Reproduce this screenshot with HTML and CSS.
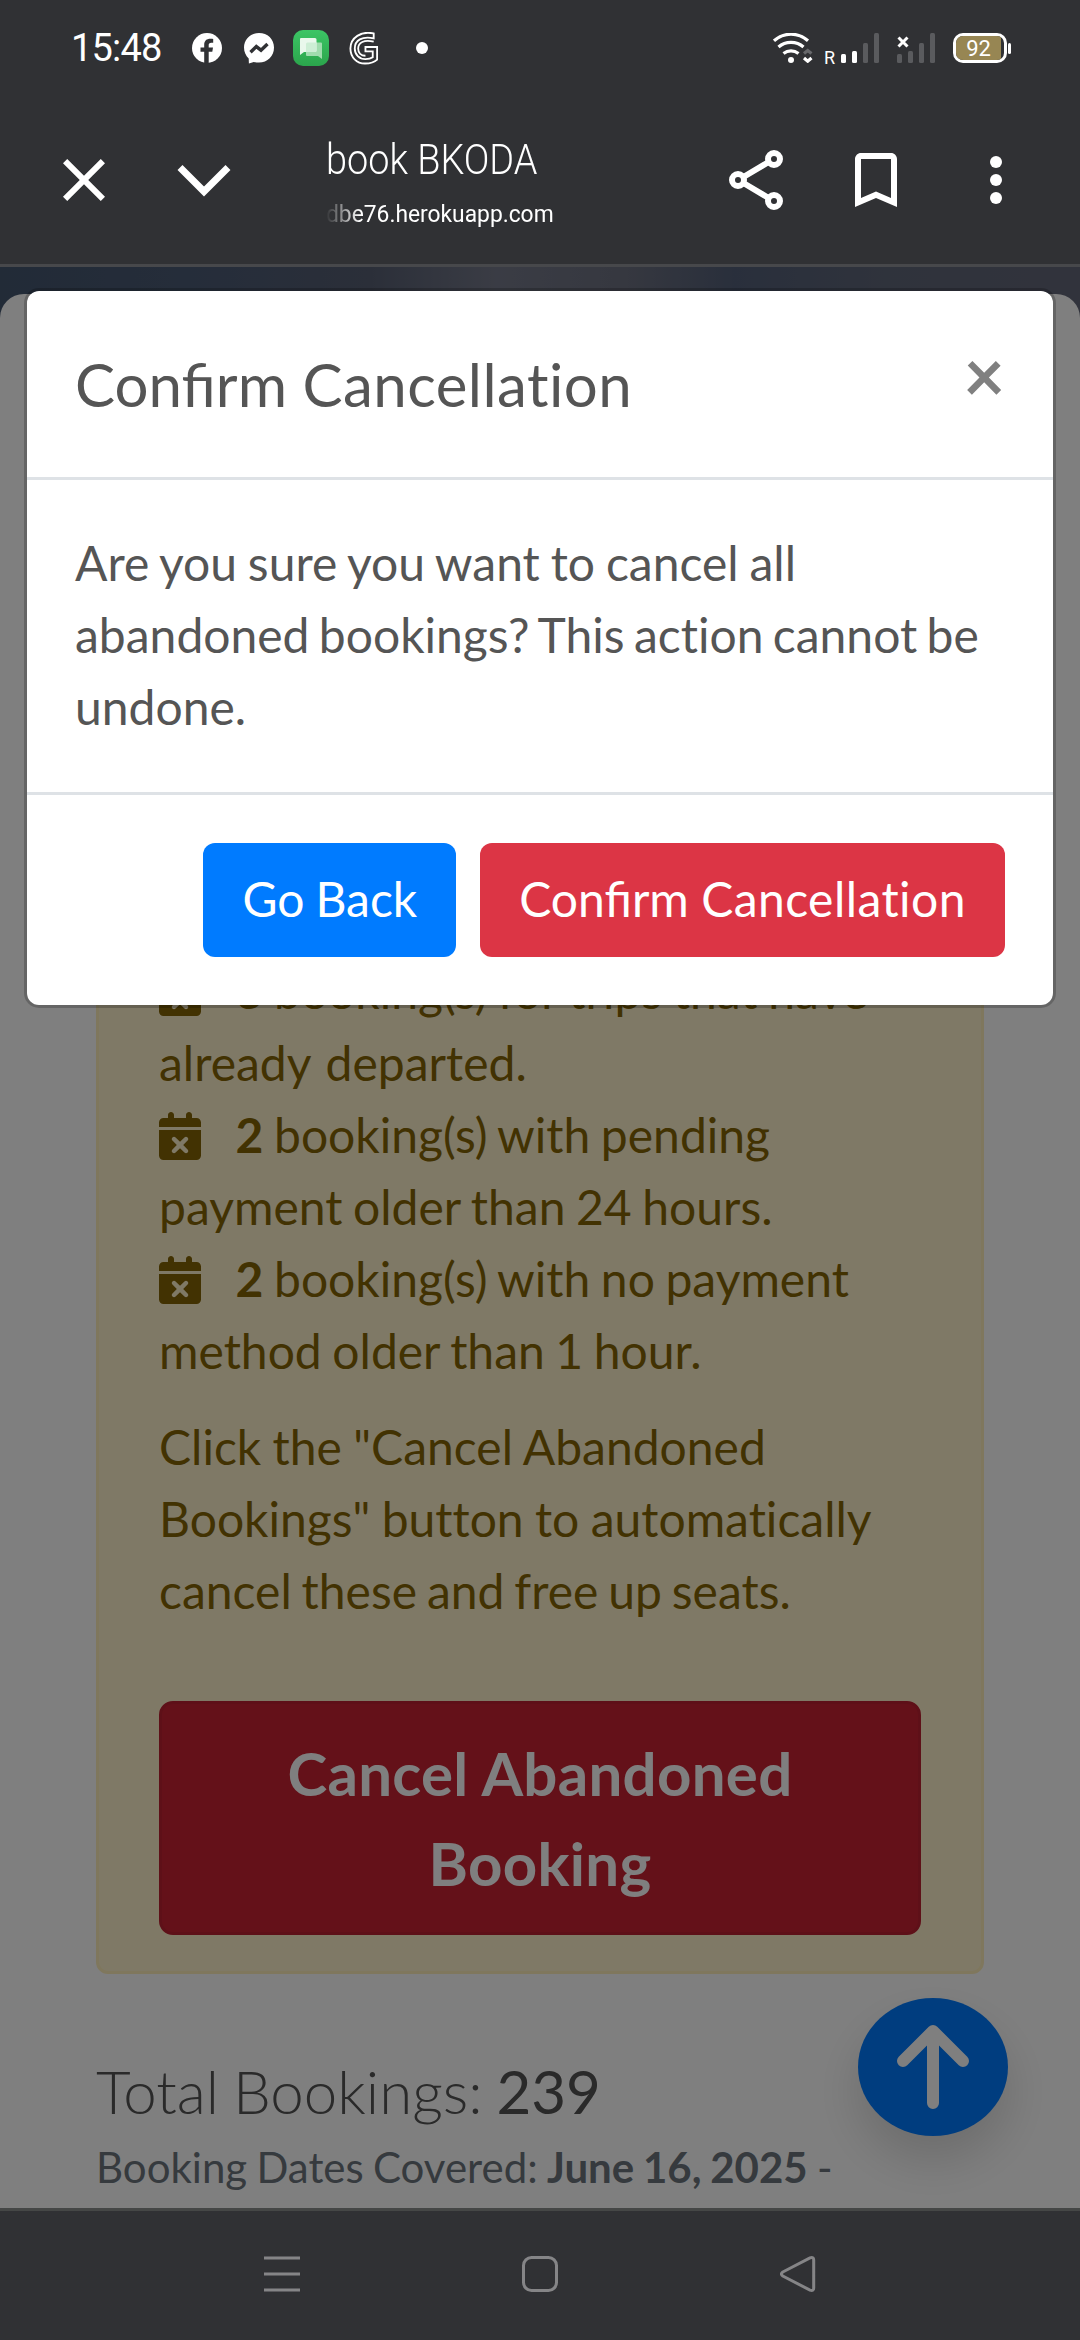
FILE: index.html
```html
<!DOCTYPE html>
<html lang="en">
<head>
<meta charset="utf-8">
<title>book BKODA</title>
<link rel="stylesheet" href="styles.css">
</head>
<body>
<div class="screen">
  <header class="chrome">
    <div class="status">
      <span class="time">15:48</span>
      <svg class="st-fb" viewBox="0 0 30 30"><circle cx="15" cy="15" r="15" fill="#fff"/><path d="M12.200 30V18.800H8.500V14.500h3.700V12c0-4.300 2.300-6.300 6.300-6.300 1.300 0 2.700.2 2.700.2v3.800h-1.900c-2 0-2.600 1-2.600 2.300v2.500h4.300l-.7 4.300h-3.600V30z" fill="#303134"/></svg>
      <svg class="st-msg" viewBox="0 0 30 31"><path d="M15 0C6.500 0 0 6.200 0 14.600c0 4.400 1.800 8.200 4.700 10.800L4.900 30.500l4.900-1.600c1.700.5 3.400.7 5.200.7 8.500 0 15-6.300 15-15S23.500 0 15 0z" fill="#fff"/><path d="M6.500 19.200 12.300 13.600 17 17.200 23.500 11" fill="none" stroke="#303134" stroke-width="3.400"/></svg>
      <svg class="st-chat" viewBox="0 0 36 36"><defs><linearGradient id="g" x1="0" y1="0" x2="0" y2="1"><stop offset="0" stop-color="#3cc565"/><stop offset="1" stop-color="#2ba54c"/></linearGradient></defs><rect width="36" height="36" rx="10" fill="url(#g)"/><path d="M14.500 12.500H28q1 0 1 1V29l-4-3H14q-1 0-1-1V14q0-1.500 1.500-1.500z" fill="#a0dcae"/><path d="M8 8h14q1.500 0 1.500 1.500V20.500q0 1.500-1.500 1.500H11l-4 3V9q0-1 1-1z" fill="#e9f8ec"/><path d="M14.500 12.500h9v8q0 1.500-1.500 1.500h-9v-8q0-1.500 1.500-1.500z" fill="#cdeed5"/></svg>
      <svg class="st-g" viewBox="0 0 30 34" fill="none" stroke="#fff" stroke-width="1.900"><path d="M25 1.500C12 -1.500 1 6 1 17c0 9 6.500 15.500 15 15.500 5.500 0 10-1.500 12.500-4V15.500H16.500v4.500h7.500v6c-2 1.500-5 2-7.500 2C10 28 5.500 23.500 5.500 17 5.500 8.500 13 4 25 6.500z"/><path d="M25 10C15 7.500 9 11 9 17c0 4.500 3 7.500 7.500 7.500"/></svg>
      <svg class="st-dot" viewBox="0 0 12 12"><circle cx="6" cy="6" r="6" fill="#fff"/></svg>
      <span class="grow"></span>
      <svg class="st-wifi" viewBox="0 0 40 30" fill="none" stroke="#fff" stroke-width="3.200"><path d="M1 7.800C11-1 25-1 35 7.800M5.500 14C12.500 7.800 23.500 7.800 30.500 14M10.500 20.500c4.500-3.600 10.500-3.600 15 0"/><circle cx="18" cy="27" r="3" fill="#fff" stroke="none"/><path d="m31 25 3.700 3.200L38.500 25"/><path d="m31 20.500 3.700-3 3.800 3" stroke="#67686b"/></svg>
      <span class="roam">R</span>
      <svg class="st-sig1" viewBox="0 0 38 30"><g fill="#fff"><rect y="21" width="5" height="9" rx="1.500"/><rect x="11" y="18" width="5" height="12" rx="1.500"/></g><g fill="#5a5b5e"><rect x="22" y="10" width="5" height="20" rx="1.500"/><rect x="33" width="5" height="30" rx="1.500"/></g></svg>
      <svg class="st-sig2" viewBox="0 0 38 30"><g fill="#5a5b5e"><rect y="21" width="5" height="9" rx="1.500"/><rect x="11" y="18" width="5" height="12" rx="1.500"/><rect x="22" y="10" width="5" height="20" rx="1.500"/><rect x="33" width="5" height="30" rx="1.500"/></g><path d="m1.500 4.500 9 9m0-9-9 9" stroke="#fff" stroke-width="3"/></svg>
      <span class="battery"><span class="charge">92</span></span><span class="nub"></span>
    </div>
    <div class="toolbar">
      <svg class="ic close-ic" viewBox="0 0 24 24"><path d="M19 6.410 17.590 5 12 10.590 6.410 5 5 6.410 10.590 12 5 17.590 6.410 19 12 13.410 17.590 19 19 17.590 13.410 12z"/></svg>
      <svg class="ic down-ic" viewBox="0 0 72 72"><path d="m12 23.500 24 24 24-24" fill="none" stroke="#fff" stroke-width="7"/></svg>
      <div class="site"><div class="site-title">book BKODA</div><div class="site-host">dbe76.herokuapp.com</div></div>
      <svg class="ic share-ic" viewBox="0 0 24 24" stroke="#fff" stroke-width="2"><g fill="none"><circle cx="18" cy="5" r="2"/><circle cx="6" cy="12" r="2"/><circle cx="18" cy="19" r="2"/><path d="m7.800 11 8.400-5M7.800 13l8.400 5"/></g></svg>
      <svg class="ic mark-ic" viewBox="0 0 24 24"><path d="M17 3H7c-1.100 0-2 .9-2 2v16l7-3 7 3V5c0-1.100-.9-2-2-2zm0 15-5-2.180L7 18V5h10v13z"/></svg>
      <svg class="ic more-ic" viewBox="0 0 24 24"><circle cx="12" cy="6" r="2"/><circle cx="12" cy="12" r="2"/><circle cx="12" cy="18" r="2"/></svg>
    </div>
  </header>

  <main class="page">
    <div class="panel">
      <section class="alert">
        <div class="reason"><svg class="cal" viewBox="0 0 448 512"><use href="#cal"/></svg> <b>3</b> booking(s) for trips that have <span class="loose">already departed.</span></div>
        <div class="reason"><svg class="cal" viewBox="0 0 448 512"><use href="#cal"/></svg> <b>2</b> booking(s) with pending payment older than 24 hours.</div>
        <div class="reason"><svg class="cal" viewBox="0 0 448 512"><path id="cal" d="M128 0c17.700 0 32 14.300 32 32V64H288V32c0-17.700 14.300-32 32-32s32 14.300 32 32V64h48c26.500 0 48 21.500 48 48v48H0V112C0 85.500 21.500 64 48 64H96V32c0-17.700 14.300-32 32-32zM0 192H448V464c0 26.500-21.500 48-48 48H48c-26.500 0-48-21.500-48-48V192zM305 305c9.400-9.400 9.400-24.600 0-33.900s-24.600-9.400-33.900 0l-47 47-47-47c-9.400-9.400-24.600-9.400-33.900 0s-9.400 24.600 0 33.900l47 47-47 47c-9.400 9.400-9.400 24.600 0 33.900s24.600 9.400 33.900 0l47-47 47 47c9.400 9.400 24.600 9.400 33.900 0s9.400-24.600 0-33.900l-47-47 47-47z"/></svg> <b>2</b> booking(s) with no payment method older than 1 hour.</div>
        <p class="hint">Click the "Cancel Abandoned Bookings" button to automatically <span class="snug">cancel these and free up seats.</span></p>
        <button class="cancel-all">Cancel Abandoned Booking</button>
      </section>
      <h2 class="total">Total Bookings: <span>239</span></h2>
      <p class="dates">Booking Dates Covered: <b>June 16, 2025</b> -</p>
    </div>
    <div class="to-top"><svg viewBox="0 0 84 96" fill="none" stroke="#fff" stroke-width="12" stroke-linecap="round" stroke-linejoin="round"><path d="M42 84V12M12 42l30-30 30 30"/></svg></div>
    <div class="backdrop"></div>
    <div class="modal">
      <div class="modal-head"><h1>Confirm <span class="wide">Cancellation</span></h1><span class="x">×</span></div>
      <div class="modal-body">Are you sure you want to cancel all <span class="tight">abandoned bookings? This ac<span class="nolig">ti</span>on cannot be</span> undone.</div>
      <div class="modal-foot"><button class="btn back">Go Back</button><button class="btn confirm">Confirm <span class="wide">Cancellation</span></button></div>
    </div>
  </main>

  <nav class="sysnav">
    <svg viewBox="0 0 36 36"><path d="M0 2h36M0 18h36M0 34h36"/></svg>
    <svg viewBox="0 0 36 36"><rect x="1.500" y="1.500" width="33" height="33" rx="8"/></svg>
    <svg viewBox="0 0 36 36"><path d="M2.800 16 30 1.900Q33.700.5 33.700 4v28q0 3.500-3.700 2.100L2.800 20Q0 18 2.800 16z"/></svg>
  </nav>
</div>
</body>
</html>
```
FILE: styles.css
```css
* { box-sizing: border-box; }
body { margin: 0; background: #303134; font-family: Lato, "Liberation Sans", sans-serif; }
svg { display: block; flex: none; }
h1, h2, p { margin: 0; font-weight: 400; }
button { font-family: inherit; border: 0; }
.nolig { font-variant-ligatures: none; }
.wide { letter-spacing: .45px; font-variant-ligatures: none; }
.screen { width: 1080px; height: 2340px; display: flex; flex-direction: column; overflow: hidden; }

/* browser chrome */
.chrome { height: 267px; background: #303134; border-bottom: 3px solid #47484b; color: #fff; flex: none; font-family: Roboto, sans-serif; }
.status { height: 96px; display: flex; align-items: center; padding: 0 69px 0 71px; }
.time { width: 121px; font-size: 38px; line-height: 96px; letter-spacing: -.8px; white-space: nowrap; }
.grow { flex: 1; }
.st-fb { width: 30px; height: 30px; }
.st-msg { width: 30px; height: 31px; margin-left: 22px; }
.st-chat { width: 36px; height: 36px; margin-left: 19px; }
.st-g { width: 30px; height: 33px; margin-left: 20px; }
.st-dot { width: 12px; height: 12px; margin-left: 37px; }
.st-wifi { width: 40px; height: 30px; }
.roam { width: 17px; margin-left: 11px; margin-top: 20px; font-size: 18px; line-height: 20px; }
.st-sig1 { width: 38px; height: 30px; }
.st-sig2 { width: 38px; height: 30px; margin-left: 18px; }
.battery { width: 54px; height: 30px; margin-left: 18px; border: 3px solid #fff; border-radius: 10px; display: flex; overflow: hidden; }
.charge { width: 45px; background: #978653; font-size: 22px; line-height: 25px; text-align: center; font-weight: 400; }
.nub { width: 3px; height: 11px; margin-left: 1px; border-radius: 2px; background: #fff; }
.toolbar { height: 168px; display: flex; align-items: center; padding: 0 48px; }
.ic { width: 72px; height: 72px; fill: #fff; }
.down-ic { margin-left: 48px; }
.site { width: 394px; margin-left: 86px; padding-top: 8px; }
.site-title { font-size: 43px; line-height: 60px; font-weight: 300; white-space: nowrap; transform: scaleX(.88); transform-origin: left; }
.site-host { font-size: 24px; line-height: 50px; font-weight: 400; white-space: nowrap; transform: scaleX(.95); transform-origin: left; -webkit-mask-image: linear-gradient(90deg, transparent, #000 36px); mask-image: linear-gradient(90deg, transparent, #000 36px); }
.mark-ic, .more-ic { margin-left: 48px; }

/* page behind the dialog */
.page { flex: 1; min-height: 0; position: relative; overflow: hidden; padding-top: 27px; background: linear-gradient(90deg, #44566f 0, #4c5b75 20%, #565e72 34%, #75798a 46%, #6c7080 58%, #535f78 68%, #5f6679 82%, #636778 100%); }
.panel { height: 1960px; background: #fff; border-radius: 24px 24px 0 0; padding: 594px 96px 0; }
.alert { border: 3px solid #ffeeba; border-radius: 12px; background: #fff3cd; color: #856404; padding: 64px 60px 36px; font-size: 48px; line-height: 72px; word-spacing: -1.7px; }
.reason { height: 144px; }
.loose { word-spacing: 3px; }
.cal { display: inline-block; width: 42px; height: 48px; margin-right: 24px; vertical-align: -7px; fill: #856404; }
.hint { margin-top: 24px; font-variant-ligatures: none; word-spacing: -.9px; }
.snug { word-spacing: -2.4px; }
.cancel-all { display: block; width: 100%; height: 234px; margin-top: 74px; padding: 24px 48px; border: 3px solid #bd2130; border-radius: 14px; background: #c82333; color: #fff; font-size: 60px; line-height: 90px; font-weight: 700; letter-spacing: .3px; }
.total { margin-top: 72px; font-size: 60px; line-height: 90px; font-weight: 300; color: #555; word-spacing: -2.5px; }
.total span { font-weight: 400; }
.dates { font-size: 42px; line-height: 63px; color: #6c757d; white-space: nowrap; word-spacing: -1.5px; }
.to-top { position: absolute; left: 858px; top: 1731px; width: 150px; height: 138px; border-radius: 50%; background: #007bff; box-shadow: 0 24px 48px rgba(0, 0, 0, .15); display: flex; align-items: center; justify-content: center; }
.to-top svg { width: 84px; height: 96px; }
.backdrop { position: absolute; inset: 0; background: rgba(0, 0, 0, .5); }

/* dialog */
.modal { position: absolute; left: 24px; right: 24px; top: 21px; border: 3px solid rgba(0, 0, 0, .2); border-radius: 15px; background: #fff; background-clip: padding-box; color: #555; }
.modal-head { display: flex; justify-content: space-between; padding: 48px; border-bottom: 3px solid #dee2e6; }
.modal-head h1 { font-size: 60px; line-height: 90px; }
.x { font-size: 72px; line-height: 70px; font-weight: 700; color: #808080; height: 72px; }
.modal-body { padding: 47px 48px 49px; font-size: 48px; line-height: 72px; word-spacing: -1.4px; }
.tight { word-spacing: -2.9px; }
.modal-foot { display: flex; justify-content: flex-end; gap: 24px; padding: 48px; border-top: 3px solid #dee2e6; }
.btn { height: 114px; padding: 0 39px 2px; border-radius: 12px; color: #fff; font-size: 48px; line-height: 72px; }
.back { background: #007bff; word-spacing: -1.3px; }
.confirm { background: #dc3545; }

/* system navigation */
.sysnav { flex: none; height: 132px; background: #303134; border-top: 3px solid #454746; display: flex; justify-content: center; gap: 222px; padding-top: 45px; }
.sysnav svg { width: 36px; height: 36px; fill: none; stroke: #858587; stroke-width: 3; }
```
